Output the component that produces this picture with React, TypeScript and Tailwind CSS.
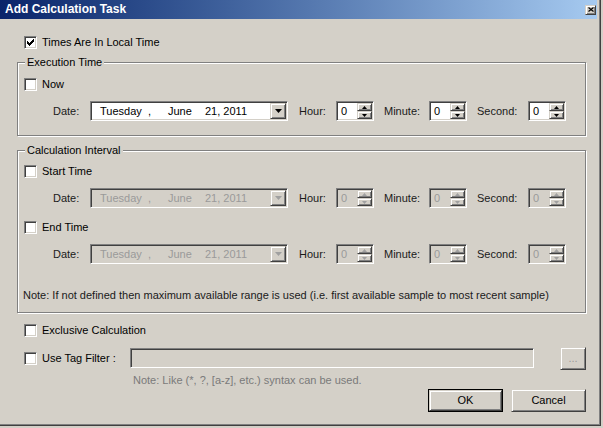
import React from "react";

const SUNKEN =
  "border border-t-[#808080] border-l-[#808080] border-r-white border-b-white shadow-[inset_1px_1px_0_#404040,inset_-1px_-1px_0_#d4d0c8]";
const RAISED =
  "border border-t-[#d4d0c8] border-l-[#d4d0c8] border-r-[#404040] border-b-[#404040] shadow-[inset_1px_1px_0_#ffffff,inset_-1px_-1px_0_#808080]";

function Check({ checked }: { checked?: boolean }) {
  return (
    <span className={`flex items-center justify-center w-[13px] h-[13px] shrink-0 bg-white ${SUNKEN}`}>
      {checked && (
        <svg width="7" height="7" viewBox="0 0 7 7" shapeRendering="crispEdges">
          <path d="M6 0h1v3h-1zM5 1h1v3h-1zM4 2h1v3h-1zM3 3h1v3h-1zM2 4h1v3h-1zM1 3h1v3h-1zM0 2h1v3h-1z" fill="#000" />
        </svg>
      )}
    </span>
  );
}

function Arrow({ dir, color, w = 7 }: { dir: "up" | "down"; color: string; w?: number }) {
  const h = Math.ceil(w / 2);
  const pts = dir === "down" ? `0,0 ${w},0 ${w / 2},${h}` : `0,${h} ${w},${h} ${w / 2},0`;
  return (
    <svg width={w} height={h} viewBox={`0 0 ${w} ${h}`}>
      <polygon points={pts} fill={color} />
    </svg>
  );
}

function SpinBtn({ up, disabled }: { up?: boolean; disabled?: boolean }) {
  return (
    <span className={`flex items-center justify-center h-[8px] w-full bg-[#d4d0c8] ${RAISED}`}>
      <Arrow dir={up ? "up" : "down"} color={disabled ? "#a0a0a0" : "#000"} w={5} />
    </span>
  );
}

function Spin({ disabled }: { disabled?: boolean }) {
  return (
    <div className={`flex w-[38px] h-[20px] p-[1px] ${SUNKEN} ${disabled ? "bg-[#d4d0c8]" : "bg-white"}`}>
      <span className={`flex-1 pl-[3px] leading-[16px] ${disabled ? "text-[#9a9a9a]" : "text-black"}`}>0</span>
      <div className="flex flex-col w-[15px]">
        <SpinBtn up disabled={disabled} />
        <SpinBtn disabled={disabled} />
      </div>
    </div>
  );
}

function DateBox({ disabled }: { disabled?: boolean }) {
  return (
    <div
      className={`flex items-center w-[198px] h-[20px] p-[1px] ${SUNKEN} ${
        disabled ? "bg-[#d4d0c8] text-[#9a9a9a]" : "bg-white text-black"
      }`}
    >
      <span className="ml-[8px] w-[48px]">Tuesday</span>
      <span className="w-[20px]">,</span>
      <span className="w-[37px]">June</span>
      <span>21, 2011</span>
      <span className={`ml-auto flex items-center justify-center w-[16px] h-[16px] bg-[#d4d0c8] ${RAISED}`}>
        <Arrow dir="down" color={disabled ? "#a0a0a0" : "#000"} w={7} />
      </span>
    </div>
  );
}

function DateRow({ disabled }: { disabled?: boolean }) {
  return (
    <div className="flex items-center h-[20px] ml-[35px] text-[#1a1a1a]">
      <span className="w-[37px]">Date:</span>
      <DateBox disabled={disabled} />
      <span className="ml-[11px] w-[37px]">Hour:</span>
      <Spin disabled={disabled} />
      <span className="ml-[10px] w-[45px]">Minute:</span>
      <Spin disabled={disabled} />
      <span className="ml-[10px] w-[51px]">Second:</span>
      <Spin disabled={disabled} />
    </div>
  );
}

function CheckRow({ label, checked, className }: { label: string; checked?: boolean; className: string }) {
  return (
    <label className={`flex items-center h-[13px] ${className}`}>
      <Check checked={checked} />
      <span className="ml-[5px]">{label}</span>
    </label>
  );
}

export default function App() {
  return (
    <div className="w-[603px] h-[428px] bg-[#d4d0c8] font-['Liberation_Sans',Arial,sans-serif] text-[11px] leading-[13px] text-black overflow-hidden">
      <div className="w-[601px] h-[426px] flex flex-col border-r border-b border-r-[#404040] border-b-[#404040] shadow-[inset_-1px_-1px_0_#808080]">
        <div className="h-[19px] mr-[3px] flex items-center bg-linear-to-r from-[#0a246a] to-[#a6caf0] pl-[5px] pr-[1px]">
          <span className="text-white font-bold text-[12px] flex-1">Add Calculation Task</span>
          <span className={`flex items-center justify-center w-[11px] h-[10px] bg-[#d4d0c8] ${RAISED}`}>
            <svg width="6" height="5" viewBox="0 0 6 5">
              <path d="M0.5 0.5L5.5 4.5M5.5 0.5L0.5 4.5" stroke="#000" strokeWidth="1.2" />
            </svg>
          </span>
        </div>

        <div className="flex flex-col pl-[17px] w-[586px]">
          <CheckRow label="Times Are In Local Time" checked className="mt-[17px] ml-[7px]" />

          <fieldset className="mt-[7px] w-[569px] border border-[#808080] shadow-[1px_1px_0_#ffffff,inset_1px_1px_0_#ffffff] pb-[14px]">
            <legend className="ml-[7px] px-[2px] leading-[13px] bg-[#d4d0c8]">Execution Time</legend>
            <CheckRow label="Now" className="mt-[9px] ml-[6px]" />
            <div className="mt-[10px]">
              <DateRow />
            </div>
          </fieldset>

          <fieldset className="mt-[8px] w-[569px] border border-[#808080] shadow-[1px_1px_0_#ffffff,inset_1px_1px_0_#ffffff] pb-[10px]">
            <legend className="ml-[7px] px-[2px] leading-[13px] bg-[#d4d0c8]">Calculation Interval</legend>
            <CheckRow label="Start Time" className="mt-[8px] ml-[6px]" />
            <div className="mt-[10px]">
              <DateRow disabled />
            </div>
            <CheckRow label="End Time" className="mt-[13px] ml-[6px]" />
            <div className="mt-[10px]">
              <DateRow disabled />
            </div>
            <p className="mt-[25px] ml-[5px] text-[#1a1a1a]">
              Note: If not defined then maximum available range is used (i.e. first available sample to most recent sample)
            </p>
          </fieldset>

          <CheckRow label="Exclusive Calculation" className="mt-[11px] ml-[7px]" />

          <div className="flex items-center h-[24px] mt-[9px] w-[569px]">
            <span className="ml-[7px]">
              <Check />
            </span>
            <span className="ml-[5px] w-[88px]">Use Tag Filter :</span>
            <span className={`w-[404px] h-[20px] bg-[#d4d0c8] ${SUNKEN}`} />
            <span className={`ml-auto flex items-center justify-center w-[26px] h-[23px] bg-[#d4d0c8] text-[#9a9a9a] ${RAISED}`}>
              ...
            </span>
          </div>

          <p className="mt-[4px] ml-[116px] text-[#7a7a7a]">Note: Like (*, ?, [a-z], etc.) syntax can be used.</p>

          <div className="flex justify-end gap-[8px] mt-[2px] w-[569px]">
            <button className="w-[75px] h-[23px] border border-black bg-[#d4d0c8]">
              <span className={`flex items-center justify-center w-full h-full ${RAISED}`}>OK</span>
            </button>
            <button className={`w-[75px] h-[23px] bg-[#d4d0c8] ${RAISED}`}>Cancel</button>
          </div>
        </div>
      </div>
    </div>
  );
}
